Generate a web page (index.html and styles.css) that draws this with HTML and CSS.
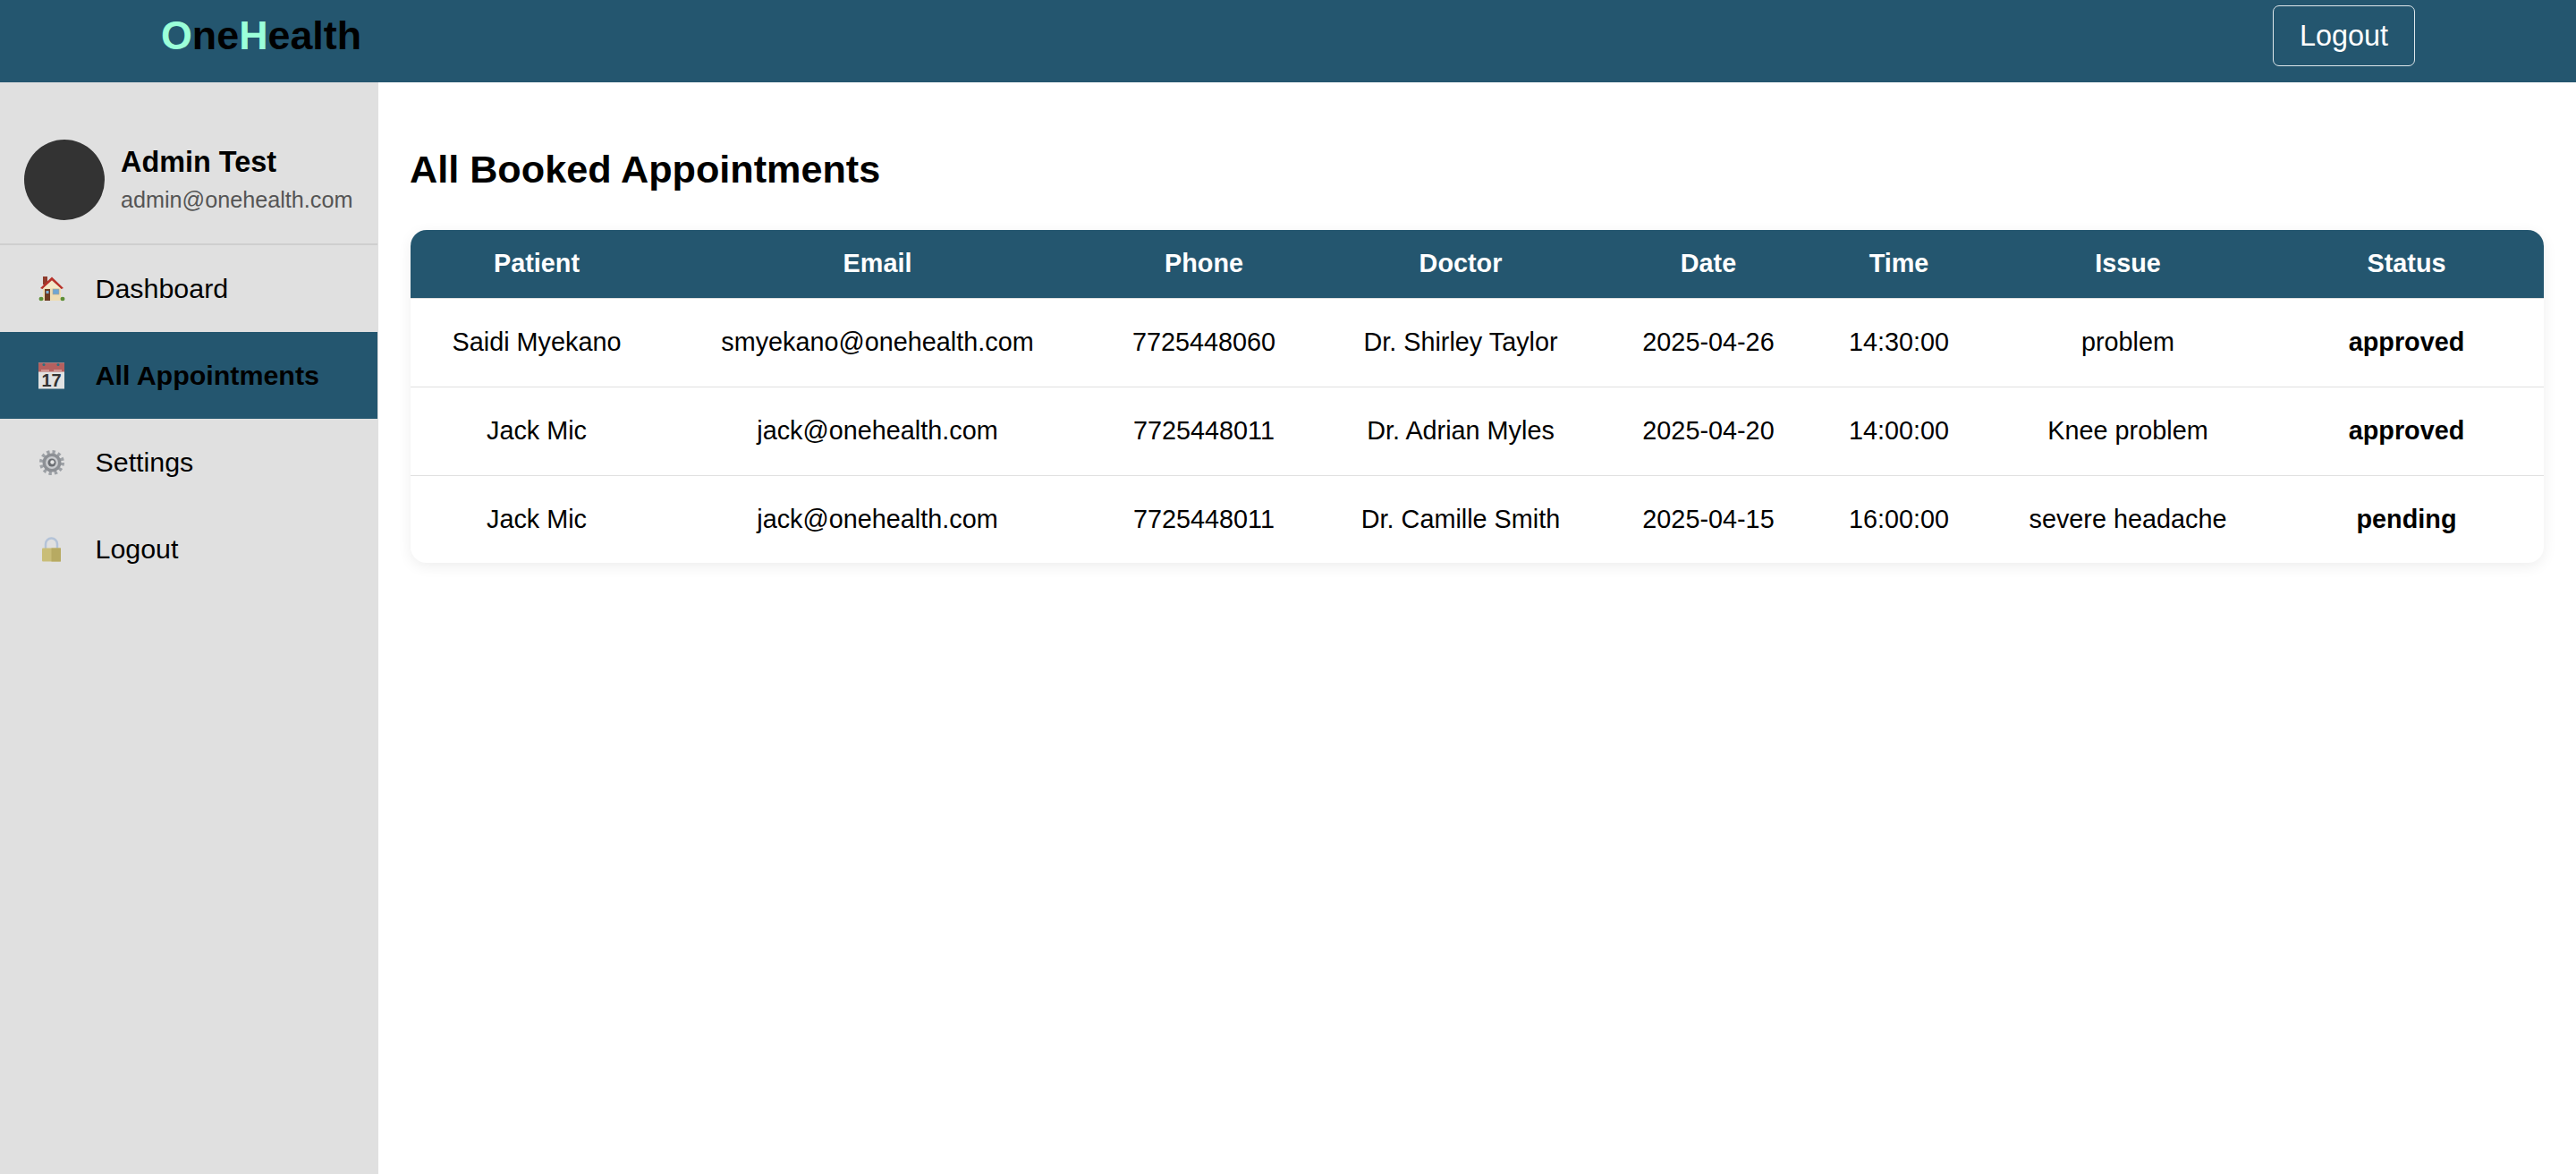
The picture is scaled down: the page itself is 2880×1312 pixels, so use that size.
FILE: index.html
```html
<!DOCTYPE html>
<html lang="en">
<head>
    <meta charset="UTF-8">
    <meta name="viewport" content="width=device-width, initial-scale=1.0">
    <title>OneHealth - All Appointments</title>
    <link rel="stylesheet" href="styles.css">
</head>
<body>
    <header class="topbar">
        <div class="logo"><span class="accent">O</span>ne<span class="accent">H</span>ealth</div>
        <button class="logout-button">Logout</button>
    </header>
    <div class="layout">
        <aside class="sidebar">
            <div class="profile">
                <div class="avatar"></div>
                <div>
                    <div class="profile-name">Admin Test</div>
                    <div class="profile-email">admin@onehealth.com</div>
                </div>
            </div>
            <nav>
                <a class="nav-item" href="#">
                    <svg class="nav-icon" viewBox="0 0 30 30">
                        <rect x="5" y="1" width="5" height="9" fill="#8f3b2c"/>
                        <rect x="5" y="13" width="20" height="15" fill="#eeddb4"/>
                        <path d="M2 14 L15 1.5 L28 14 L25.5 15 L15 5.5 L4.500 15 Z" fill="#b8322a"/>
                        <path d="M15 5.500 L25 14.500 L5 14.500 Z" fill="#f4e8c8"/>
                        <rect x="7" y="15" width="6" height="13" fill="#6e3a22"/>
                        <rect x="8.500" y="17" width="3" height="3" fill="#7fb2d8"/>
                        <rect x="16" y="15" width="7" height="6" fill="#6fa6d2" stroke="#b9a987" stroke-width="0.6"/>
                        <ellipse cx="3" cy="26" rx="2.500" ry="2.300" fill="#5d8f36"/>
                        <ellipse cx="27" cy="26" rx="2.500" ry="2.300" fill="#5d8f36"/>
                    </svg>
                    <span>Dashboard</span>
                </a>
                <a class="nav-item active" href="#">
                    <svg class="nav-icon" viewBox="0 0 30 30">
                        <rect x="0" y="0.500" width="29" height="29" fill="#e2e2e2"/>
                        <rect x="0" y="0.500" width="29" height="10" fill="#b5605f"/>
                        <circle cx="6" cy="2.500" r="1.500" fill="#2f6f80"/>
                        <circle cx="22" cy="2.500" r="1.500" fill="#2f6f80"/>
                        <path d="M3 9 H12 M17 9 H26" stroke="#d9a3a0" stroke-width="1.500"/>
                        <text class="calendar-day" x="14.500" y="27" text-anchor="middle">17</text>
                    </svg>
                    <span>All Appointments</span>
                </a>
                <a class="nav-item" href="#">
                    <svg class="nav-icon" viewBox="0 0 30 30">
                        <circle cx="15" cy="15" r="12" fill="none" stroke="#9da1a6" stroke-width="4" stroke-dasharray="3.300 3"/>
                        <circle cx="15" cy="15" r="10.500" fill="#8d9095"/>
                        <circle cx="15" cy="15" r="7" fill="#c9cbce"/>
                        <circle cx="15" cy="15" r="4.500" fill="#6a6d72"/>
                        <circle cx="15.500" cy="14.500" r="2.200" fill="#e6e6e6"/>
                    </svg>
                    <span>Settings</span>
                </a>
                <a class="nav-item" href="#">
                    <svg class="nav-icon" viewBox="0 0 30 30">
                        <path d="M8 14 V9 A6.500 6.500 0 0 1 21 9 V14" fill="none" stroke="#b4c3d8" stroke-width="2.500"/>
                        <rect x="4" y="13.500" width="21" height="15" rx="1" fill="#c9bd78"/>
                        <rect x="14.500" y="13.500" width="10.500" height="15" fill="#b7aa62"/>
                    </svg>
                    <span>Logout</span>
                </a>
            </nav>
        </aside>
        <main class="content">
            <h1>All Booked Appointments</h1>
            <div class="table-card">
                <table>
                    <colgroup>
                        <col class="col-patient">
                        <col class="col-email">
                        <col class="col-phone">
                        <col class="col-doctor">
                        <col class="col-date">
                        <col class="col-time">
                        <col class="col-issue">
                        <col class="col-status">
                    </colgroup>
                    <thead>
                        <tr>
                            <th>Patient</th>
                            <th>Email</th>
                            <th>Phone</th>
                            <th>Doctor</th>
                            <th>Date</th>
                            <th>Time</th>
                            <th>Issue</th>
                            <th>Status</th>
                        </tr>
                    </thead>
                    <tbody>
                        <tr>
                            <td>Saidi Myekano</td>
                            <td>smyekano@onehealth.com</td>
                            <td>7725448060</td>
                            <td>Dr. Shirley Taylor</td>
                            <td>2025-04-26</td>
                            <td>14:30:00</td>
                            <td>problem</td>
                            <td class="status">approved</td>
                        </tr>
                        <tr>
                            <td>Jack Mic</td>
                            <td>jack@onehealth.com</td>
                            <td>7725448011</td>
                            <td>Dr. Adrian Myles</td>
                            <td>2025-04-20</td>
                            <td>14:00:00</td>
                            <td>Knee problem</td>
                            <td class="status">approved</td>
                        </tr>
                        <tr>
                            <td>Jack Mic</td>
                            <td>jack@onehealth.com</td>
                            <td>7725448011</td>
                            <td>Dr. Camille Smith</td>
                            <td>2025-04-15</td>
                            <td>16:00:00</td>
                            <td>severe headache</td>
                            <td class="status">pending</td>
                        </tr>
                    </tbody>
                </table>
            </div>
        </main>
    </div>
</body>
</html>
```

FILE: styles.css
```css
* {
    box-sizing: border-box;
}
body {
    font-family: 'Liberation Sans', Arial, sans-serif;
    background-color: #fff;
    color: #000;
    margin: 0;
    height: 100vh;
    display: flex;
    flex-direction: column;
}
.topbar {
    height: 92px;
    flex-shrink: 0;
    background-color: #24566f;
    padding: 6px 180px 0 180px;
    display: flex;
    justify-content: space-between;
    align-items: flex-start;
}
.logo {
    font-size: 44.8px;
    font-weight: bold;
    line-height: 66px;
}
.accent {
    color: #9bffd9;
}
.logout-button {
    width: 159px;
    height: 68px;
    font-family: inherit;
    font-size: 32.4px;
    color: #fff;
    background: transparent;
    border: 1.5px solid #dfe7eb;
    border-radius: 7px;
    cursor: pointer;
}
.layout {
    flex: 1;
    display: flex;
    min-height: 0;
}
.sidebar {
    width: 423px;
    flex-shrink: 0;
    background-color: #e0e0e0;
    padding: 64px 1px 0 0;
}
.profile {
    height: 118px;
    padding-left: 27px;
    display: flex;
    gap: 18px;
    border-bottom: 2px solid #cfcfcf;
}
.avatar {
    width: 90px;
    height: 90px;
    border-radius: 50%;
    background-color: #333;
}
.profile-name {
    font-size: 32.4px;
    font-weight: bold;
    line-height: 37px;
    margin-top: 7px;
}
.profile-email {
    font-size: 25.2px;
    color: #555;
    line-height: 29px;
    margin-top: 9px;
}
.nav-item {
    height: 97px;
    padding-left: 43px;
    display: flex;
    align-items: center;
    gap: 33.500px;
    font-size: 30.4px;
    color: #000;
    text-decoration: none;
}
.nav-item.active {
    background-color: #24566f;
    font-weight: bold;
}
.nav-icon {
    width: 30px;
    height: 30px;
}
.calendar-day {
    font-size: 20px;
    fill: #333;
}
.content {
    flex: 1;
    padding: 0 36px;
}
h1 {
    font-size: 43.2px;
    font-weight: bold;
    line-height: 50px;
    margin: 72px 0 43px -1px;
}
.table-card {
    border-radius: 18px;
    overflow: hidden;
    box-shadow: 0 4px 16px rgba(0, 0, 0, 0.07);
}
table {
    width: 100%;
    table-layout: fixed;
    border-collapse: collapse;
    font-size: 28.8px;
}
.col-patient { width: 282px; }
.col-email { width: 480px; }
.col-phone { width: 250px; }
.col-doctor { width: 324px; }
.col-date { width: 230px; }
.col-time { width: 196px; }
.col-issue { width: 316px; }
.col-status { width: 307px; }
th {
    height: 76px;
    background-color: #24566f;
    color: #fff;
    font-weight: bold;
    text-align: center;
}
td {
    height: 99px;
    text-align: center;
    border-top: 1px solid #e0e0e0;
}
tbody tr:last-child td {
    height: 98px;
}
.status {
    font-weight: bold;
}
```
